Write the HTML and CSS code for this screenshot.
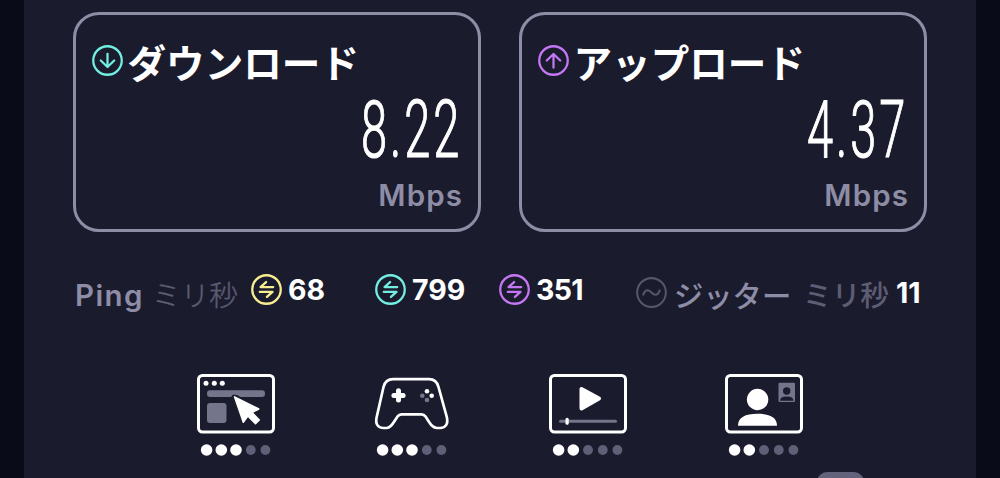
FILE: index.html
```html
<!DOCTYPE html>
<html lang="ja">
<head>
<meta charset="utf-8">
<title>Speed test</title>
<link rel="stylesheet" href="styles.css">
</head>
<body>
<main class="panel">
  <section class="cards">
    <article class="card">
      <h2 class="card-title">
        <svg class="ring teal" viewBox="0 0 30 30"><circle cx="15" cy="15" r="13.8"/><path d="M15 8.5V21M8.5 15L15 21.3L21.5 15"/></svg>
        <span>ダウンロード</span>
      </h2>
      <div class="speed"><span>8.22</span></div>
      <div class="unit">Mbps</div>
    </article>
    <article class="card">
      <h2 class="card-title">
        <svg class="ring purple" viewBox="0 0 30 30"><circle cx="15" cy="15" r="13.8"/><path d="M15 22V9M8.5 15L15 8.7L21.5 15"/></svg>
        <span>アップロード</span>
      </h2>
      <div class="speed"><span>4.37</span></div>
      <div class="unit">Mbps</div>
    </article>
  </section>

  <section class="stats">
    <span class="label low">Ping</span>
    <span class="ms light low">ミリ秒</span>
    <svg class="ring yellow" viewBox="0 0 30 30"><circle cx="15" cy="15" r="13.8"/><path d="M21.5 12.7H9.2L14.6 7.8M8.5 17.3H20.8L15.4 22.2"/></svg>
    <span class="value">68</span>
    <svg class="ring teal" viewBox="0 0 30 30"><circle cx="15" cy="15" r="13.8"/><path d="M21.5 12.7H9.2L14.6 7.8M8.5 17.3H20.8L15.4 22.2"/></svg>
    <span class="value">799</span>
    <svg class="ring purple" viewBox="0 0 30 30"><circle cx="15" cy="15" r="13.8"/><path d="M21.5 12.7H9.2L14.6 7.8M8.5 17.3H20.8L15.4 22.2"/></svg>
    <span class="value narrow">351</span>
    <svg class="ring muted" viewBox="0 0 30 30"><circle cx="15" cy="15" r="13.9"/><path d="M7 17C9 12 12 11.5 15 15S21 18 23 13"/></svg>
    <span class="jitter low">ジッター</span>
    <span class="ms low">ミリ秒</span>
    <span class="value eleven">11</span>
  </section>

  <section class="ratings">
    <div class="rating">
      <svg class="pic" viewBox="0 0 78 60">
        <rect class="frame" x="1.5" y="1.5" width="75" height="56.5" rx="4"/>
        <g class="fill"><circle cx="9" cy="9.3" r="2.5"/><circle cx="17.3" cy="9.3" r="2.5"/><circle cx="25.3" cy="9.3" r="2.5"/></g>
        <rect class="dim" x="10" y="16.3" width="58" height="6.7" rx="3"/>
        <rect class="dim" x="10" y="29" width="19.5" height="20" rx="3"/>
        <path class="halo" d="M34 24L36 21L40 21.5L46 25Z"/>
        <path class="cursor" d="M37.5 22.8L46.3 48.3L50.8 42L58.5 49.8L62.3 46L55 38.5L61.8 35Z"/>
      </svg>
      <svg class="dots" viewBox="0 0 78 12"><g class="fill"><circle cx="9.6" cy="6" r="5.8"/><circle cx="24.3" cy="6" r="5.8"/><circle cx="39" cy="6" r="5.8"/></g><g class="off"><circle cx="53.8" cy="6" r="4.9"/><circle cx="68.4" cy="6" r="4.9"/></g></svg>
    </div>
    <div class="rating">
      <svg class="pic" viewBox="0 0 78 60">
        <path class="pad" d="M20 5.2H56Q63.5 5.2 65.5 13L73.8 43C75.5 50 72.5 54 67 54H64C59 54 57 49 52.5 42.5Q51 40.3 48.5 40.3H28.5Q26 40.3 24.5 42.5C20 49 18 54 13.5 54H10.5C5 54 2 50 3.7 43L10.5 13Q12.5 5.2 20 5.2Z"/>
        <path class="plus" d="M25.5 16.8V26M20.9 21.4H30.1"/>
        <g class="fill"><circle cx="54" cy="17.2" r="2.3"/><circle cx="58.7" cy="21.7" r="2.3"/></g>
        <g class="dim"><circle cx="49.3" cy="21.7" r="2.3"/><circle cx="54" cy="26" r="2.3"/></g>
      </svg>
      <svg class="dots" viewBox="0 0 78 12"><g class="fill"><circle cx="9.6" cy="6" r="5.8"/><circle cx="24.3" cy="6" r="5.8"/><circle cx="39" cy="6" r="5.8"/></g><g class="off"><circle cx="53.8" cy="6" r="4.9"/><circle cx="68.4" cy="6" r="4.9"/></g></svg>
    </div>
    <div class="rating">
      <svg class="pic" viewBox="0 0 78 60">
        <rect class="frame" x="1.5" y="1.5" width="75" height="56.5" rx="4"/>
        <path class="play" d="M32.5 15V34.5L50 24.5Z"/>
        <rect class="dim" x="10" y="45.8" width="58" height="3" rx="1.5"/>
        <rect class="fill" x="16.5" y="43.7" width="3.2" height="7" rx="1.5"/>
      </svg>
      <svg class="dots" viewBox="0 0 78 12"><g class="fill"><circle cx="9.6" cy="6" r="5.8"/><circle cx="24.3" cy="6" r="5.8"/></g><g class="off"><circle cx="39" cy="6" r="4.9"/><circle cx="53.8" cy="6" r="4.9"/><circle cx="68.4" cy="6" r="4.9"/></g></svg>
    </div>
    <div class="rating">
      <svg class="pic" viewBox="0 0 78 60">
        <rect class="frame" x="1.5" y="1.5" width="75" height="56.5" rx="4"/>
        <circle class="fill" cx="32.6" cy="25.5" r="10.7"/>
        <path class="fill" d="M13 51.8C13 43.5 20 39.8 32.5 39.8S52 43.5 52 51.8Z"/>
        <rect class="dim" x="53.5" y="8.7" width="16.5" height="19.3" rx="1"/>
        <circle class="hole" cx="61.7" cy="17" r="3.7"/>
        <path class="hole" d="M55 26.8Q55 22.5 61.7 22.5T68.5 26.8Z"/>
      </svg>
      <svg class="dots" viewBox="0 0 78 12"><g class="fill"><circle cx="9.6" cy="6" r="5.8"/><circle cx="24.3" cy="6" r="5.8"/></g><g class="off"><circle cx="39" cy="6" r="4.9"/><circle cx="53.8" cy="6" r="4.9"/><circle cx="68.4" cy="6" r="4.9"/></g></svg>
    </div>
  </section>
  <div class="handle"></div>
</main>
</body>
</html>
```
FILE: styles.css
```css
* { box-sizing: border-box; }

body {
  margin: 0;
  background: #090b19;
  color: #fff;
  font-family: Inter, "Noto Sans CJK JP", sans-serif;
}

.panel {
  width: 952px;
  height: 478px;
  margin: 0 auto;
  padding: 12px 49px 0;
  background: #1b1b2e;
  overflow: hidden;
}

.cards {
  display: grid;
  grid-template-columns: 408px 408px;
  justify-content: space-between;
}

.card {
  height: 220px;
  padding: 28px 16px 0;
  border: 3px solid #8d8da6;
  border-radius: 26px;
}

.card-title {
  display: flex;
  align-items: center;
  gap: 4.5px;
  height: 36px;
  margin: 0;
  font: 700 38.6px/36px "Noto Sans CJK JP", sans-serif;
  white-space: nowrap;
}

.card-title .ring { margin-top: -2px; }

.ring {
  flex: none;
  width: 31px;
  height: 31px;
  fill: none;
  stroke: currentColor;
  stroke-width: 2.2;
  stroke-linecap: round;
  stroke-linejoin: round;
}

.teal { color: #72eee2; }
.purple { color: #c477f2; }
.yellow { color: #f8ed91; }
.muted { color: #55566a; stroke-width: 2; }

.speed {
  height: 72px;
  margin-top: 15px;
  text-align: right;
  font: 300 79px/72px Roboto, sans-serif;
  -webkit-text-stroke: 1.2px #fff;
}

.speed span {
  display: inline-block;
  letter-spacing: 5px;
  transform: scaleX(.595);
  transform-origin: right;
}

.unit {
  height: 46px;
  padding-top: 11px;
  text-align: right;
  color: #8d8da6;
  font-size: 29.5px;
  font-weight: 600;
  line-height: 36px;
  letter-spacing: 1.1px;
  margin-right: -1px;
}

.stats {
  display: grid;
  grid-template-columns: 78px 98px 38px 86px 38px 86px 38px 99px 38px 129px 93px 30px;
  align-items: center;
  height: 36px;
  margin: 40px -10px 0 2px;
  white-space: nowrap;
  line-height: 36px;
}

.stats .ring { margin-top: -6px; }
.low { padding-top: 3px; }

.label, .value {
  font-size: 28.5px;
  font-weight: 600;
}

.label.low { padding-top: 5px; }

.value {
  font-weight: 700;
  margin: -6px 0 0 -1px;
}

.narrow { letter-spacing: -.7px; }
.label { color: #8d8da6; letter-spacing: 1.4px; font-size: 29.5px; }

.ms, .jitter {
  color: #5d5d73;
  font-family: "Noto Sans CJK JP", sans-serif;
  font-size: 28.7px;
  font-weight: 500;
}

.light { font-weight: 300; margin-left: -1px; -webkit-text-stroke: .4px #5d5d73; }
.jitter { color: #8d8da6; font-size: 29.3px; }
.stats .muted { margin-top: 0; }
.stats .eleven { margin: 1px 0 0; }

.ratings {
  display: flex;
  gap: 98px;
  margin: 66px 0 0 124px;
}

.rating { width: 78px; }

.pic {
  display: block;
  width: 78px;
  height: 60px;
}

.frame, .pad {
  fill: none;
  stroke: #fff;
  stroke-width: 3;
}

.pad { stroke-width: 2.7; }
.fill { fill: #fff; }
.dim { fill: #74748a; }
.off { fill: #5f5f77; }
.hole, .halo { fill: #1b1b2e; }
.halo { stroke: #1b1b2e; stroke-width: 1; stroke-linejoin: round; }

.cursor {
  fill: #fff;
  stroke: #fff;
  stroke-width: 1.5;
  stroke-linejoin: round;
}

.plus {
  stroke: #fff;
  stroke-width: 5;
  stroke-linecap: round;
}

.play {
  fill: #fff;
  stroke: #fff;
  stroke-width: 4;
  stroke-linejoin: round;
}

.dots {
  display: block;
  width: 78px;
  height: 12px;
  margin-top: 10px;
}

.handle {
  width: 47px;
  height: 20px;
  margin: 16px 0 0 744px;
  border-radius: 12px;
  background: #62627a;
}
```
